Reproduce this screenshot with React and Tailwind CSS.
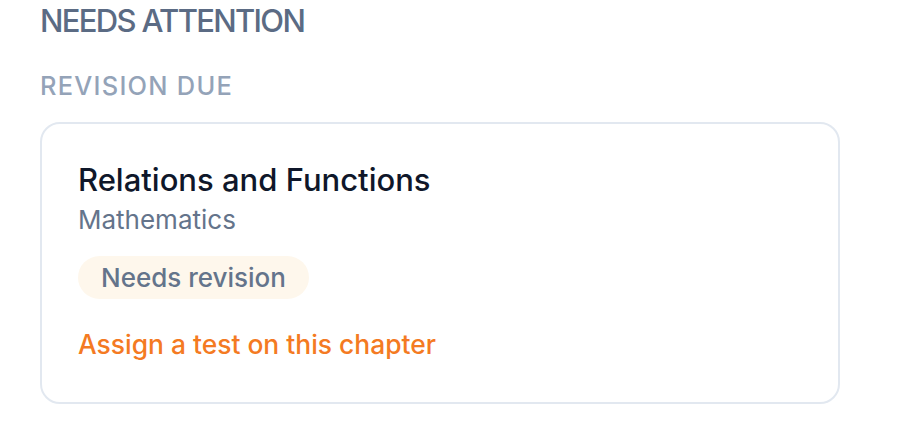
export default function App() {
  return (
    <div className="min-h-screen bg-white px-10 pt-[1px]" style={{ fontFamily: 'Inter, "Noto Sans", sans-serif' }}>
      <h2 className="text-[31px] font-medium uppercase tracking-[-0.054em] text-[#5b6b84] leading-[40px]">
        Needs attention
      </h2>
      <h3 className="mt-[28px] text-[25.4px] font-medium uppercase tracking-[0.05em] text-[#94a3b8] leading-[34px]">
        Revision due
      </h3>
      <div className="mt-[19px] w-[800px] rounded-[20px] border-2 border-[#e2e8f0] px-[36px] pt-[36px] pb-[40px]">
        <p className="text-[31px] font-medium text-[#0f172a] leading-[40px]">Relations and Functions</p>
        <p className="mt-[3px] text-[26px] text-[#64748b] leading-[34px]">Mathematics</p>
        <span className="mt-[19px] inline-flex h-[43px] items-center rounded-full bg-[#fef7ec] px-[23px] text-[26px] font-medium text-[#64748b]">
          Needs revision
        </span>
        <p className="mt-[27px] text-[26.4px] font-medium text-[#f47a22] leading-[36px]">Assign a test on this chapter</p>
      </div>
    </div>
  );
}
